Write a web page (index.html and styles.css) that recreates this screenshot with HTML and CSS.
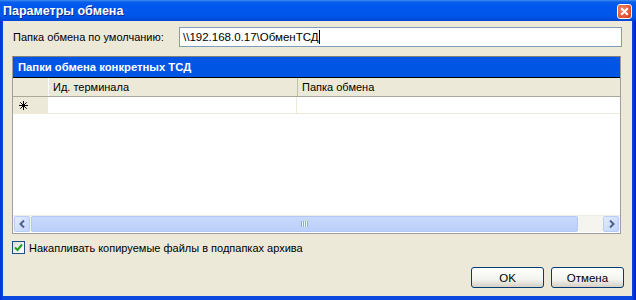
FILE: index.html
```html
<!DOCTYPE html>
<html lang="ru">
<head>
  <meta charset="UTF-8">
  <title>Параметры обмена</title>
  <link rel="stylesheet" href="styles.css">
</head>
<body>
  <div class="window">
    <div class="titlebar">
      <span class="title">Параметры обмена</span>
      <span class="close">
        <svg width="9" height="9" viewBox="0 0 9 9"><path d="M1.2 1.2 L7.8 7.8 M7.8 1.2 L1.2 7.8" stroke="#fff" stroke-width="2"/></svg>
      </span>
    </div>
    <div class="body">
      <div class="path-row">
        <label class="path-label">Папка обмена по умолчанию:</label>
        <div class="path-input">\\192.168.0.17\ОбменТСД<span class="caret"></span></div>
      </div>

      <div class="grid">
        <div class="grid-caption">Папки обмена конкретных ТСД</div>
        <div class="grid-head">
          <div class="rowhead"></div>
          <div class="col col-id">Ид. терминала</div>
          <div class="col col-path">Папка обмена</div>
        </div>
        <div class="grid-row">
          <div class="rowhead star">
            <svg width="9" height="9" viewBox="0 0 9 9"><path d="M4.5 0 V9 M0 4.5 H9 M1.3 1.3 L7.7 7.7 M7.7 1.3 L1.3 7.7" stroke="#000" stroke-width="1"/></svg>
          </div>
          <div class="cell col-id"></div>
          <div class="cell col-path"></div>
        </div>
        <div class="grid-fill"></div>
        <div class="hscroll">
          <div class="sbtn">
            <svg width="7" height="8" viewBox="0 0 7 8"><path d="M5 0.5 L1.5 4 L5 7.5" stroke="#4d6185" stroke-width="2" fill="none"/></svg>
          </div>
          <div class="thumb"><span class="grip"></span></div>
          <div class="track"></div>
          <div class="sbtn">
            <svg width="7" height="8" viewBox="0 0 7 8"><path d="M2 0.5 L5.5 4 L2 7.5" stroke="#4d6185" stroke-width="2" fill="none"/></svg>
          </div>
        </div>
      </div>

      <div class="check-row">
        <span class="checkbox">
          <svg width="9" height="9" viewBox="0 0 9 9"><path d="M1 4.5 L3.5 7 L8 1.5" stroke="#21a121" stroke-width="2" fill="none"/></svg>
        </span>
        <span>Накапливать копируемые файлы в подпапках архива</span>
      </div>

      <div class="buttons">
        <button class="btn">OK</button>
        <button class="btn">Отмена</button>
      </div>
    </div>
  </div>
</body>
</html>
```

FILE: styles.css
```css
body {
  margin: 0;
  font-family: "Liberation Sans", Arial, sans-serif;
  font-size: 11px;
  color: #000;
}
.window {
  width: 636px;
  height: 300px;
  display: flex;
  flex-direction: column;
  background: linear-gradient(to right, #0831d9, #0a48e0 3px, #0a48e0 632px, #0019cf);
}
.titlebar {
  height: 21px;
  display: flex;
  align-items: center;
  justify-content: space-between;
  padding: 0 4px 0 3px;
  background: linear-gradient(to bottom, #3d8cf6 0, #0a5ee8 2px, #0058ee 5px, #0055ea 16px, #0046d4 21px);
}
.title {
  color: #fff;
  font-weight: bold;
  font-size: 12.5px;
  text-shadow: 1px 1px 0 #0a2a8a;
}
.close {
  width: 13px;
  height: 13px;
  margin-top: 1px;
  border: 1px solid #fff;
  border-radius: 3px;
  background: radial-gradient(circle at 35% 35%, #f08a6b, #e0502a 70%, #c63d16);
  display: flex;
  align-items: center;
  justify-content: center;
}
.body {
  flex: 1;
  margin: 0 4px 4px 3px;
  background: #ece9d8;
  display: flex;
  flex-direction: column;
  padding: 6px 10px 0 9px;
}
.path-row {
  display: flex;
  align-items: center;
  height: 20px;
}
.path-label {
  width: 166px;
  padding-left: 1px;
}
.path-input {
  flex: 1;
  height: 18px;
  line-height: 18px;
  border: 1px solid #7f9db9;
  background: #fff;
  padding-left: 3px;
  font-size: 11.5px;
}
.caret {
  display: inline-block;
  width: 1px;
  height: 14px;
  background: #000;
  vertical-align: -3px;
}
.grid {
  margin-top: 9px;
  margin-right: 1px;
  height: 176px;
  display: flex;
  flex-direction: column;
  border: 1px solid #a0a0a0;
  border-top: 1px solid #808080;
  background: #fff;
}
.grid-caption {
  height: 20px;
  line-height: 20px;
  background: #0055e5;
  color: #fff;
  font-weight: bold;
  font-size: 11.25px;
  padding-left: 5px;
  border-bottom: 1px solid #000;
}
.grid-head, .grid-row {
  display: flex;
}
.grid-head {
  height: 18px;
  line-height: 18px;
  background: #ece9d8;
  border-bottom: 1px solid #aca899;
}
.rowhead {
  width: 35px;
  background: #ece9d8;
}
.col {
  padding-left: 4px;
  border-left: 1px solid #fff;
}
.col-id {
  width: 244px;
}
.col-path {
  flex: 1;
  border-left: 1px solid #c0bfb5;
}
.grid-row {
  height: 16px;
  border-bottom: 1px solid #ece9d8;
}
.star {
  width: 29px;
  padding-left: 6px;
  display: flex;
  align-items: center;
}
.cell {
  background: #fff;
}
.grid-row .col-path {
  border-left: 1px solid #ece9d8;
}
.grid-row .col-id {
  width: 248px;
}
.grid-fill {
  flex: 1;
}
.hscroll {
  height: 16px;
  display: flex;
  align-items: center;
  gap: 1px;
  padding: 0 1px;
  background: #f5f4ee;
  border-top: 1px solid #eeede5;
  border-bottom: 1px solid #fff;
}
.sbtn {
  width: 14px;
  height: 14px;
  border: 1px solid #b8cdf5;
  border-radius: 2px;
  background: linear-gradient(to bottom right, #e3ebfd, #c2d4fb);
  display: flex;
  align-items: center;
  justify-content: center;
}
.thumb {
  width: 545px;
  height: 14px;
  border: 1px solid #b2c8f5;
  border-radius: 2px;
  background: linear-gradient(to bottom, #c8d9fc, #bccffa);
  display: flex;
  align-items: center;
  justify-content: center;
}
.grip {
  width: 7px;
  height: 6px;
  background: repeating-linear-gradient(to right, #8ba8ea 0 1px, #eef3fe 1px 2px);
}
.track {
  flex: 1;
  height: 16px;
}
.check-row {
  display: flex;
  align-items: center;
  gap: 4px;
  margin-top: 7px;
  height: 13px;
}
.checkbox {
  width: 11px;
  height: 11px;
  border: 1px solid #1c5180;
  background: linear-gradient(to bottom right, #dcdcd7, #fff);
  display: flex;
  align-items: center;
  justify-content: center;
}
.buttons {
  display: flex;
  justify-content: flex-end;
  gap: 7px;
  margin-top: 13px;
  margin-right: -2px;
}
.btn {
  width: 73px;
  height: 21px;
  border: 1px solid #003c74;
  border-radius: 3px;
  background: linear-gradient(to bottom, #ffffff, #f3f3ef 60%, #d6d0c5);
  font-family: "Liberation Sans", Arial, sans-serif;
  font-size: 11.5px;
  color: #000;
  padding: 0;
}
```
